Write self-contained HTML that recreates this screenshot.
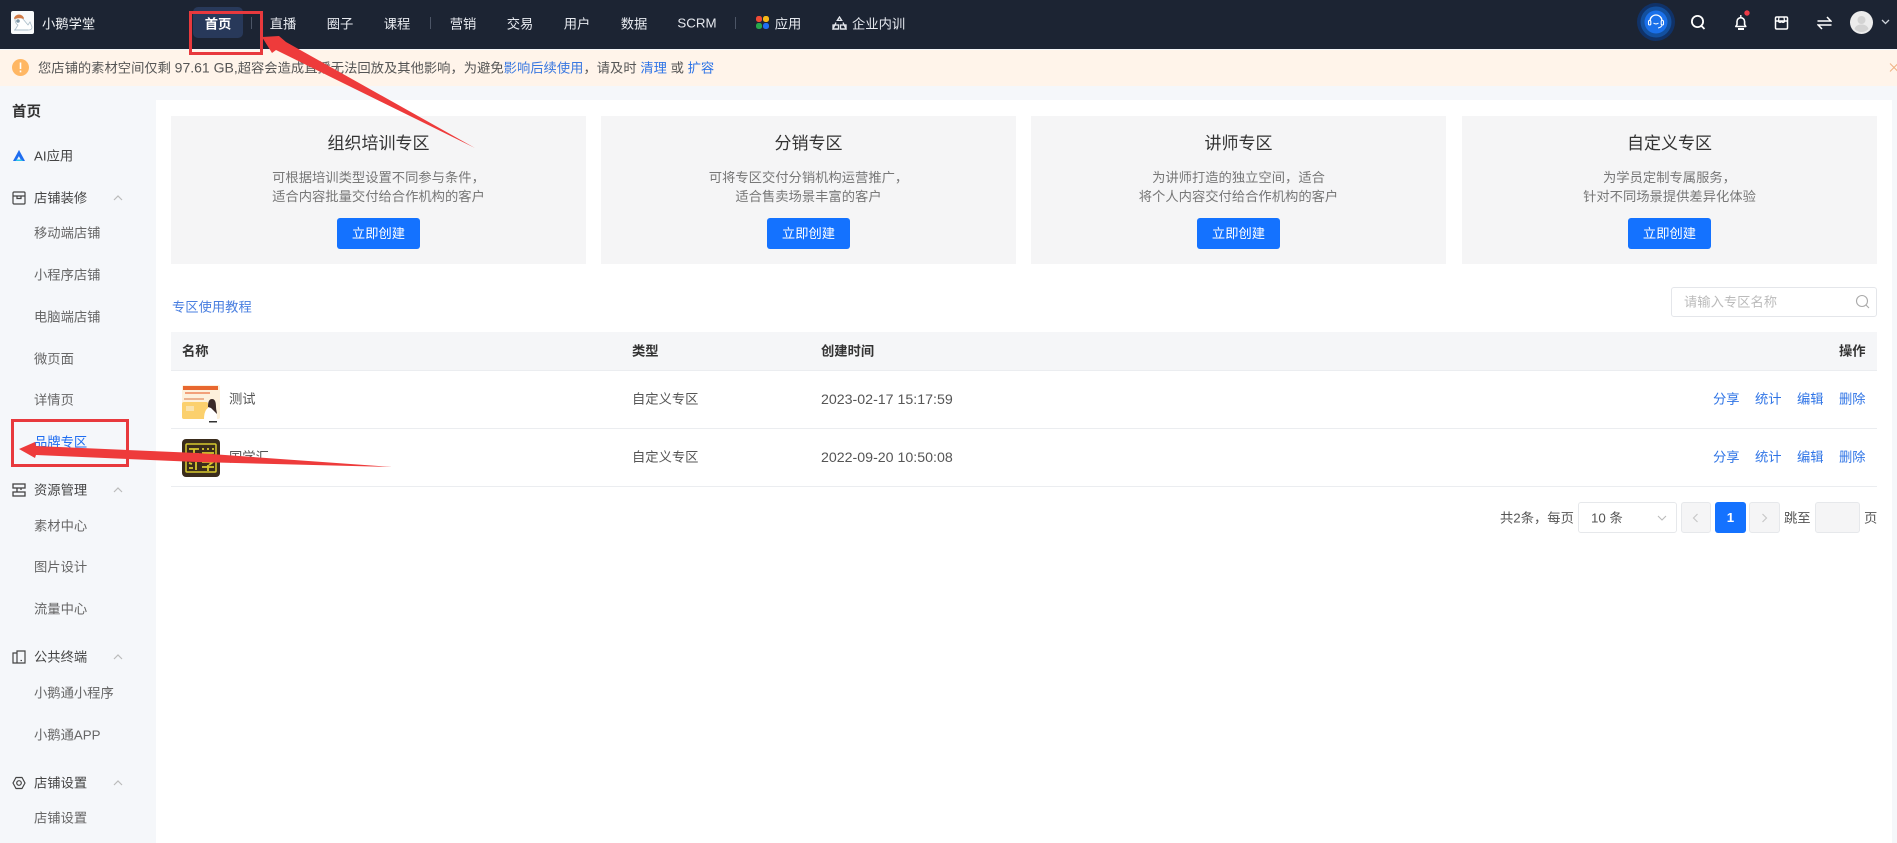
<!DOCTYPE html>
<html lang="zh"><head><meta charset="utf-8"><title>小鹅学堂</title>
<style>
*{box-sizing:border-box}
html,body{margin:0;padding:0;width:1897px;height:843px;overflow:hidden;background:#f5f7fa;font-family:"Liberation Sans","Noto Sans CJK SC",sans-serif;font-size:13.3px;color:#333}
.a{position:absolute;white-space:nowrap}
.c{transform:translate(-50%,-50%)}
.m{transform:translateY(calc(-50% - 1px))}
#top{left:0;top:0;width:1897px;height:49px;background:#1c2433}
.n{color:#e6e9ef;font-size:13.3px;top:23px}
.sep{top:17px;width:1px;height:12px;background:#4c5566}
#notice{left:0;top:50px;width:1897px;height:36px;background:#fff4ea;color:#555}
#main{left:156px;top:100px;width:1736px;height:743px;background:#fff}
.card{top:116px;width:415px;height:148px;background:#f5f5f6;text-align:center}
.card h3{margin:0;position:absolute;left:0;right:0;top:15px;font-weight:400;font-size:17px;line-height:26px;color:#333}
.card p{margin:0;position:absolute;left:0;right:0;top:52px;font-size:13.3px;line-height:19px;color:#777}
.card b{position:absolute;left:166px;top:102px;width:83px;height:31px;border-radius:3px;background:#1472ff;color:#fff;font-weight:400;font-size:13.3px;line-height:31px}
.s{font-size:13.3px;color:#666;left:34px}
.h{font-size:13.3px;color:#444;left:34px}
.chev{left:113px;width:10px;height:6px}
.ic{left:12px;width:14px;height:14px}
.cell{font-size:13.3px;color:#555}
.date{font-size:14.2px;color:#555}
.th{font-size:13.3px;color:#333;font-weight:700;top:351px}
.lk{color:#2f74e6;font-size:13.3px}
.line{left:171px;width:1706px;height:1px;background:#ebedf0}
.pg{top:502px;height:31px;border-radius:3px}
</style></head><body>

<div class="a" id="top"></div>
<svg class="a" style="left:11px;top:11px" width="23" height="23" viewBox="0 0 23 23"><rect width="23" height="23" rx="2" fill="#f8fafb"/><path d="M4 8c0 3 1 5 3 6l-3 5h14c2 0 3-1 3-3l-2-5-2 3-5-6c-1-1-3-2-4-2z" fill="#fff" stroke="#a9bcc8" stroke-width=".8"/><path d="M3 8a5 4.500 0 0 1 10 0c-2-1-7-1-10 0z" fill="#d07a45"/><circle cx="7" cy="10" r="1.800" fill="#7b95a6"/><path d="M3 19h14" stroke="#a9bcc8" stroke-width="1"/></svg>
<div class="a m" style="left:42px;top:24px;color:#f1f3f6;font-size:13.3px">小鹅学堂</div>

<div class="a" style="left:193px;top:7px;width:50px;height:31px;border-radius:5px;background:#28395a"></div>
<div class="a n c" style="left:218px;color:#fff;font-weight:700">首页</div>
<div class="a sep" style="left:251px"></div>
<div class="a n c" style="left:283px">直播</div>
<div class="a n c" style="left:340px">圈子</div>
<div class="a n c" style="left:397px">课程</div>
<div class="a sep" style="left:430px"></div>
<div class="a n c" style="left:463px">营销</div>
<div class="a n c" style="left:520px">交易</div>
<div class="a n c" style="left:577px">用户</div>
<div class="a n c" style="left:634px">数据</div>
<div class="a n c" style="left:697px">SCRM</div>
<div class="a sep" style="left:735px"></div>
<svg class="a" style="left:756px;top:16px" width="13" height="13" viewBox="0 0 13 13"><rect width="6" height="6" rx="2.400" fill="#ef4b36"/><rect x="7" width="6" height="6" rx="2.400" fill="#f7b717"/><rect y="7" width="6" height="6" rx="2.400" fill="#27a74b"/><rect x="7" y="7" width="6" height="6" rx="2.400" fill="#1f6df0"/></svg>
<div class="a n c" style="left:788px">应用</div>
<svg class="a" style="left:832px;top:16px" width="15" height="14" viewBox="0 0 15 14" fill="none" stroke="#e6e9ef" stroke-width="1.300"><path d="M7.500 1l2.200 3.400H5.300z"/><path d="M4 6.500L1 13h5.500M11 6.500L14 13H9"/><rect x="1" y="9" width="5.500" height="4"/><rect x="8.500" y="9" width="5.500" height="4"/></svg>
<div class="a n" style="left:852px;top:23px;transform:translateY(-50%)">企业内训</div>

<svg class="a" style="left:1636px;top:2px" width="40" height="40" viewBox="0 0 40 40"><circle cx="20" cy="20" r="19" fill="#103268"/><circle cx="20" cy="20" r="15.500" fill="#13509f"/><circle cx="20" cy="20" r="11.500" fill="#1a70ea"/><path d="M14 19a6 6 0 0 1 12 0" fill="none" stroke="#fff" stroke-width="1.300"/><rect x="12.500" y="18.500" width="2.300" height="4.500" rx="1.100" fill="none" stroke="#fff" stroke-width="1.100"/><rect x="25.200" y="18.500" width="2.300" height="4.500" rx="1.100" fill="none" stroke="#fff" stroke-width="1.100"/><path d="M17.500 21c1.300 1.200 3.700 1.200 5 0M26 23.500c-1 1.500-2 2.200-4 2.500" fill="none" stroke="#fff" stroke-width="1.100"/></svg>
<svg class="a" style="left:1690px;top:14px" width="16" height="17" viewBox="0 0 16 17" fill="none" stroke="#fff" stroke-width="1.800"><circle cx="7.500" cy="7.500" r="5.600"/><path d="M11.500 12l3 3"/></svg>
<svg class="a" style="left:1733px;top:10px" width="20" height="21" viewBox="0 0 20 21"><path d="M2.800 16.500l1.200-2V11.500a3.800 3.800 0 0 1 7.600 0v3l1.200 2z" fill="none" stroke="#fff" stroke-width="1.600" stroke-linejoin="round"/><path d="M5 19h6" stroke="#fff" stroke-width="2"/><path d="M7.800 5v3" stroke="#fff" stroke-width="1.400"/><circle cx="14" cy="3" r="2.700" fill="#ef3b46"/></svg>
<svg class="a" style="left:1774px;top:16px" width="15" height="14" viewBox="0 0 15 14" fill="none" stroke="#fff" stroke-width="1.500"><rect x="1.500" y="1" width="12" height="12" rx="1.200"/><path d="M1.500 5h12"/><path d="M5 1l-.5 4c0 1.800 2.800 1.800 3 0 .2 1.800 3 1.800 3 0L10 1" stroke-width="1.200"/></svg>
<svg class="a" style="left:1817px;top:16px" width="15" height="14" viewBox="0 0 15 14" fill="none" stroke="#fff" stroke-width="1.500"><path d="M.5 5h13.300L10 1M14.500 9H1.200l3.800 4"/></svg>
<svg class="a" style="left:1850px;top:11px" width="23" height="23" viewBox="0 0 23 23"><circle cx="11.500" cy="11.500" r="11.500" fill="#ececec"/><circle cx="11.500" cy="9" r="4" fill="#d3d3d3"/><path d="M4.500 18c1-3.500 4-4.500 7-4.500s6 1 7 4.500c-2 2-4.500 3-7 3s-5-1-7-3z" fill="#d3d3d3"/></svg>
<svg class="a" style="left:1881px;top:19px" width="9" height="6" viewBox="0 0 9 6" fill="none" stroke="#cfd4dc" stroke-width="1.300"><path d="M1 1l3.500 3.500L8 1"/></svg>

<div class="a" id="notice"></div>
<svg class="a" style="left:12px;top:59px" width="17" height="17" viewBox="0 0 17 17"><circle cx="8.500" cy="8.500" r="8.500" fill="#ffb764"/><rect x="7.700" y="3.500" width="1.600" height="6.500" fill="#fff"/><rect x="7.700" y="11.500" width="1.600" height="1.800" fill="#fff"/></svg>
<div class="a m" style="left:38px;top:68px;font-size:13.3px;color:#555">您店铺的素材空间仅剩 <span style="font-size:14px">97.61 GB,</span>超容会造成直播无法回放及其他影响，为避免<span style="color:#3a78e0">影响后续使用</span>，请及时 <span style="color:#2f74e6">清理</span> 或 <span style="color:#2f74e6">扩容</span></div>
<svg class="a" style="left:1889px;top:62px" width="8" height="11" viewBox="0 0 8 11" fill="none" stroke="#f0b184" stroke-width="1"><path d="M1 1.500l8 8M9 1.500l-8 8"/></svg>

<div class="a m" style="left:12px;top:112px;font-size:14.500px;font-weight:700;color:#333">首页</div>
<svg class="a" style="left:12px;top:149px" width="14" height="13" viewBox="0 0 14 13"><path d="M7 1L1 12h3l3-5 1-3z" fill="#1f6df0"/><path d="M7 1l6 11H9.500L6 5.500z" fill="#1f6df0"/><path d="M4.500 10.500h5l1.500 1.500H3.500z" fill="#2ec5e8"/></svg>
<div class="a h m" style="top:156px">AI应用</div>

<svg class="a ic" style="top:191px" viewBox="0 0 14 14" fill="none" stroke="#444" stroke-width="1.200"><rect x="1" y="1" width="12" height="12" rx="1"/><path d="M1 5h12M5 5v2.500h4V5"/></svg>
<div class="a h m" style="top:198px">店铺装修</div>
<svg class="a chev" style="top:195px" viewBox="0 0 10 6" fill="none" stroke="#bbb" stroke-width="1.200"><path d="M1 5l4-4 4 4"/></svg>
<div class="a s m" style="top:233px">移动端店铺</div>
<div class="a s m" style="top:275px">小程序店铺</div>
<div class="a s m" style="top:317px">电脑端店铺</div>
<div class="a s m" style="top:359px">微页面</div>
<div class="a s m" style="top:400px">详情页</div>
<div class="a m" style="left:34px;top:442px;font-size:13.3px;color:#1f6df0">品牌专区</div>

<svg class="a ic" style="top:483px" viewBox="0 0 14 14" fill="none" stroke="#444" stroke-width="1.300"><rect x="1" y="1" width="12" height="4"/><rect x="1" y="9" width="12" height="4"/><path d="M5 5v4M9 5v2"/></svg>
<div class="a h m" style="top:490px">资源管理</div>
<svg class="a chev" style="top:487px" viewBox="0 0 10 6" fill="none" stroke="#bbb" stroke-width="1.200"><path d="M1 5l4-4 4 4"/></svg>
<div class="a s m" style="top:526px">素材中心</div>
<div class="a s m" style="top:567px">图片设计</div>
<div class="a s m" style="top:609px">流量中心</div>

<svg class="a ic" style="top:650px" viewBox="0 0 14 14" fill="none" stroke="#444" stroke-width="1.200"><path d="M5 3H1v10h12V1H5v12"/><path d="M8.500 10.500h1.500"/></svg>
<div class="a h m" style="top:657px">公共终端</div>
<svg class="a chev" style="top:654px" viewBox="0 0 10 6" fill="none" stroke="#bbb" stroke-width="1.200"><path d="M1 5l4-4 4 4"/></svg>
<div class="a s m" style="top:693px">小鹅通小程序</div>
<div class="a s m" style="top:735px">小鹅通APP</div>

<svg class="a ic" style="top:776px" viewBox="0 0 14 14" fill="none" stroke="#444" stroke-width="1.200"><path d="M4 1.500h6l3 5.500-3 5.500H4L1 7z" stroke-linejoin="round"/><circle cx="7" cy="7" r="2.300"/></svg>
<div class="a h m" style="top:783px">店铺设置</div>
<svg class="a chev" style="top:780px" viewBox="0 0 10 6" fill="none" stroke="#bbb" stroke-width="1.200"><path d="M1 5l4-4 4 4"/></svg>
<div class="a s m" style="top:818px">店铺设置</div>

<div class="a" id="main"></div>

<div class="a card" style="left:171px"><h3>组织培训专区</h3><p>可根据培训类型设置不同参与条件，<br>适合内容批量交付给合作机构的客户</p><b>立即创建</b></div>
<div class="a card" style="left:601px"><h3>分销专区</h3><p>可将专区交付分销机构运营推广，<br>适合售卖场景丰富的客户</p><b>立即创建</b></div>
<div class="a card" style="left:1031px"><h3>讲师专区</h3><p>为讲师打造的独立空间，适合<br>将个人内容交付给合作机构的客户</p><b>立即创建</b></div>
<div class="a card" style="left:1462px"><h3>自定义专区</h3><p>为学员定制专属服务，<br>针对不同场景提供差异化体验</p><b>立即创建</b></div>

<div class="a m" style="left:172px;top:307px;font-size:13.3px;color:#4a7fe0">专区使用教程</div>
<div class="a" style="left:1671px;top:287px;width:206px;height:30px;border:1px solid #e4e6ea;border-radius:3px;background:#fff"></div>
<div class="a m" style="left:1684px;top:302px;font-size:13.3px;color:#bbb">请输入专区名称</div>
<svg class="a" style="left:1855px;top:294px" width="15" height="15" viewBox="0 0 15 15" fill="none" stroke="#aaa" stroke-width="1.100"><circle cx="7" cy="7" r="5.500"/><path d="M11 11l3 3"/></svg>

<div class="a" style="left:171px;top:332px;width:1706px;height:38px;background:#f5f6f8"></div>
<div class="a line" style="top:370px"></div>
<div class="a line" style="top:428px"></div>
<div class="a line" style="top:486px"></div>
<div class="a th m" style="left:182px">名称</div>
<div class="a th m" style="left:632px">类型</div>
<div class="a th m" style="left:821px">创建时间</div>
<div class="a th m" style="left:1839px">操作</div>

<svg class="a" style="left:182px;top:385px" width="38" height="38" viewBox="0 0 38 38"><rect width="38" height="34" rx="2" fill="#fdf1dc"/><rect x="1" y="1" width="35" height="4" fill="#e8672f"/><rect x="3" y="7" width="25" height="2" fill="#f2a17a"/><rect x="2" y="13" width="20" height="2" fill="#ecb38f"/><rect y="17" width="26" height="17" rx="2" fill="#fbd06d"/><rect x="4" y="21" width="8" height="5" fill="#f9e2ac"/><path d="M22 34c0-8 3-12 7-12s6 4 6 12z" fill="#fff"/><path d="M26 22c0-5 1-8 4-8s4 3 4 8c0 3 1 5 1 7l-3-3-3-3z" fill="#3a2a28"/><rect x="27" y="36" width="8" height="1.500" fill="#333"/></svg>
<div class="a cell m" style="left:229px;top:399px">测试</div>
<div class="a cell m" style="left:632px;top:399px">自定义专区</div>
<div class="a date m" style="left:821px;top:401px">2023-02-17 15:17:59</div>
<svg class="a" style="left:182px;top:439px" width="38" height="38" viewBox="0 0 38 38"><rect width="38" height="38" rx="4" fill="#3a2c1c"/><rect x="4" y="5" width="30" height="28" rx="1" fill="none" stroke="#d8c92e" stroke-width="1.500"/><path d="M7 10h10M12 10v10M7 15h10M7 20h10M20 10h2M25 10h2M30 10h2M20 14h12M20 18h12M7 24l3 1M7 29h4M14 23v8M20 23h11l-4 3M26 26v6M20 28h12" stroke="#d8c92e" stroke-width="1.800" fill="none"/></svg>
<div class="a cell m" style="left:229px;top:457px">国学汇</div>
<div class="a cell m" style="left:632px;top:457px">自定义专区</div>
<div class="a date m" style="left:821px;top:459px">2022-09-20 10:50:08</div>

<div class="a lk m" style="left:1713px;top:399px">分享</div><div class="a lk m" style="left:1755px;top:399px">统计</div><div class="a lk m" style="left:1797px;top:399px">编辑</div><div class="a lk m" style="left:1839px;top:399px">删除</div>
<div class="a lk m" style="left:1713px;top:457px">分享</div><div class="a lk m" style="left:1755px;top:457px">统计</div><div class="a lk m" style="left:1797px;top:457px">编辑</div><div class="a lk m" style="left:1839px;top:457px">删除</div>

<div class="a m" style="left:1500px;top:518px;font-size:13.3px;color:#555">共2条，每页</div>
<div class="a pg" style="left:1578px;width:99px;border:1px solid #e6e8eb;background:#fff"></div>
<div class="a m" style="left:1591px;top:518px;font-size:13.3px;color:#555">10 条</div>
<svg class="a" style="left:1657px;top:515px" width="10" height="6" viewBox="0 0 10 6" fill="none" stroke="#bbb" stroke-width="1.100"><path d="M1 1l4 4 4-4"/></svg>
<div class="a pg" style="left:1681px;width:30px;border:1px solid #e6e8eb;background:#f5f5f6"></div>
<svg class="a" style="left:1692px;top:513px" width="7" height="10" viewBox="0 0 7 10" fill="none" stroke="#c8c8c8" stroke-width="1.200"><path d="M5.500 1l-4 4 4 4"/></svg>
<div class="a pg" style="left:1715px;width:31px;background:#1472ff;color:#fff;text-align:center;line-height:31px;font-weight:700;font-size:13.3px">1</div>
<div class="a pg" style="left:1749px;width:31px;border:1px solid #e6e8eb;background:#f5f5f6"></div>
<svg class="a" style="left:1761px;top:513px" width="7" height="10" viewBox="0 0 7 10" fill="none" stroke="#c8c8c8" stroke-width="1.200"><path d="M1.500 1l4 4-4 4"/></svg>
<div class="a m" style="left:1784px;top:518px;font-size:13.3px;color:#555">跳至</div>
<div class="a pg" style="left:1815px;width:45px;border:1px solid #e6e8eb;background:#f5f5f6"></div>
<div class="a m" style="left:1864px;top:518px;font-size:13.3px;color:#555">页</div>

<svg class="a" style="left:0;top:0" width="1897" height="843" viewBox="0 0 1897 843">
<rect x="190.500" y="12.500" width="71" height="41" fill="none" stroke="#e8393d" stroke-width="3"/>
<rect x="12.500" y="420.500" width="115" height="45" fill="none" stroke="#e8393d" stroke-width="3"/>
<polygon points="262,37 279,36 286,42 475,148 276,50 272,53" fill="#ee3b3b"/>
<polygon points="19,449 35,442 36,446 197,453 392,467 197,462 36,455 35,458" fill="#ee3b3b"/>
</svg>
</body></html>
